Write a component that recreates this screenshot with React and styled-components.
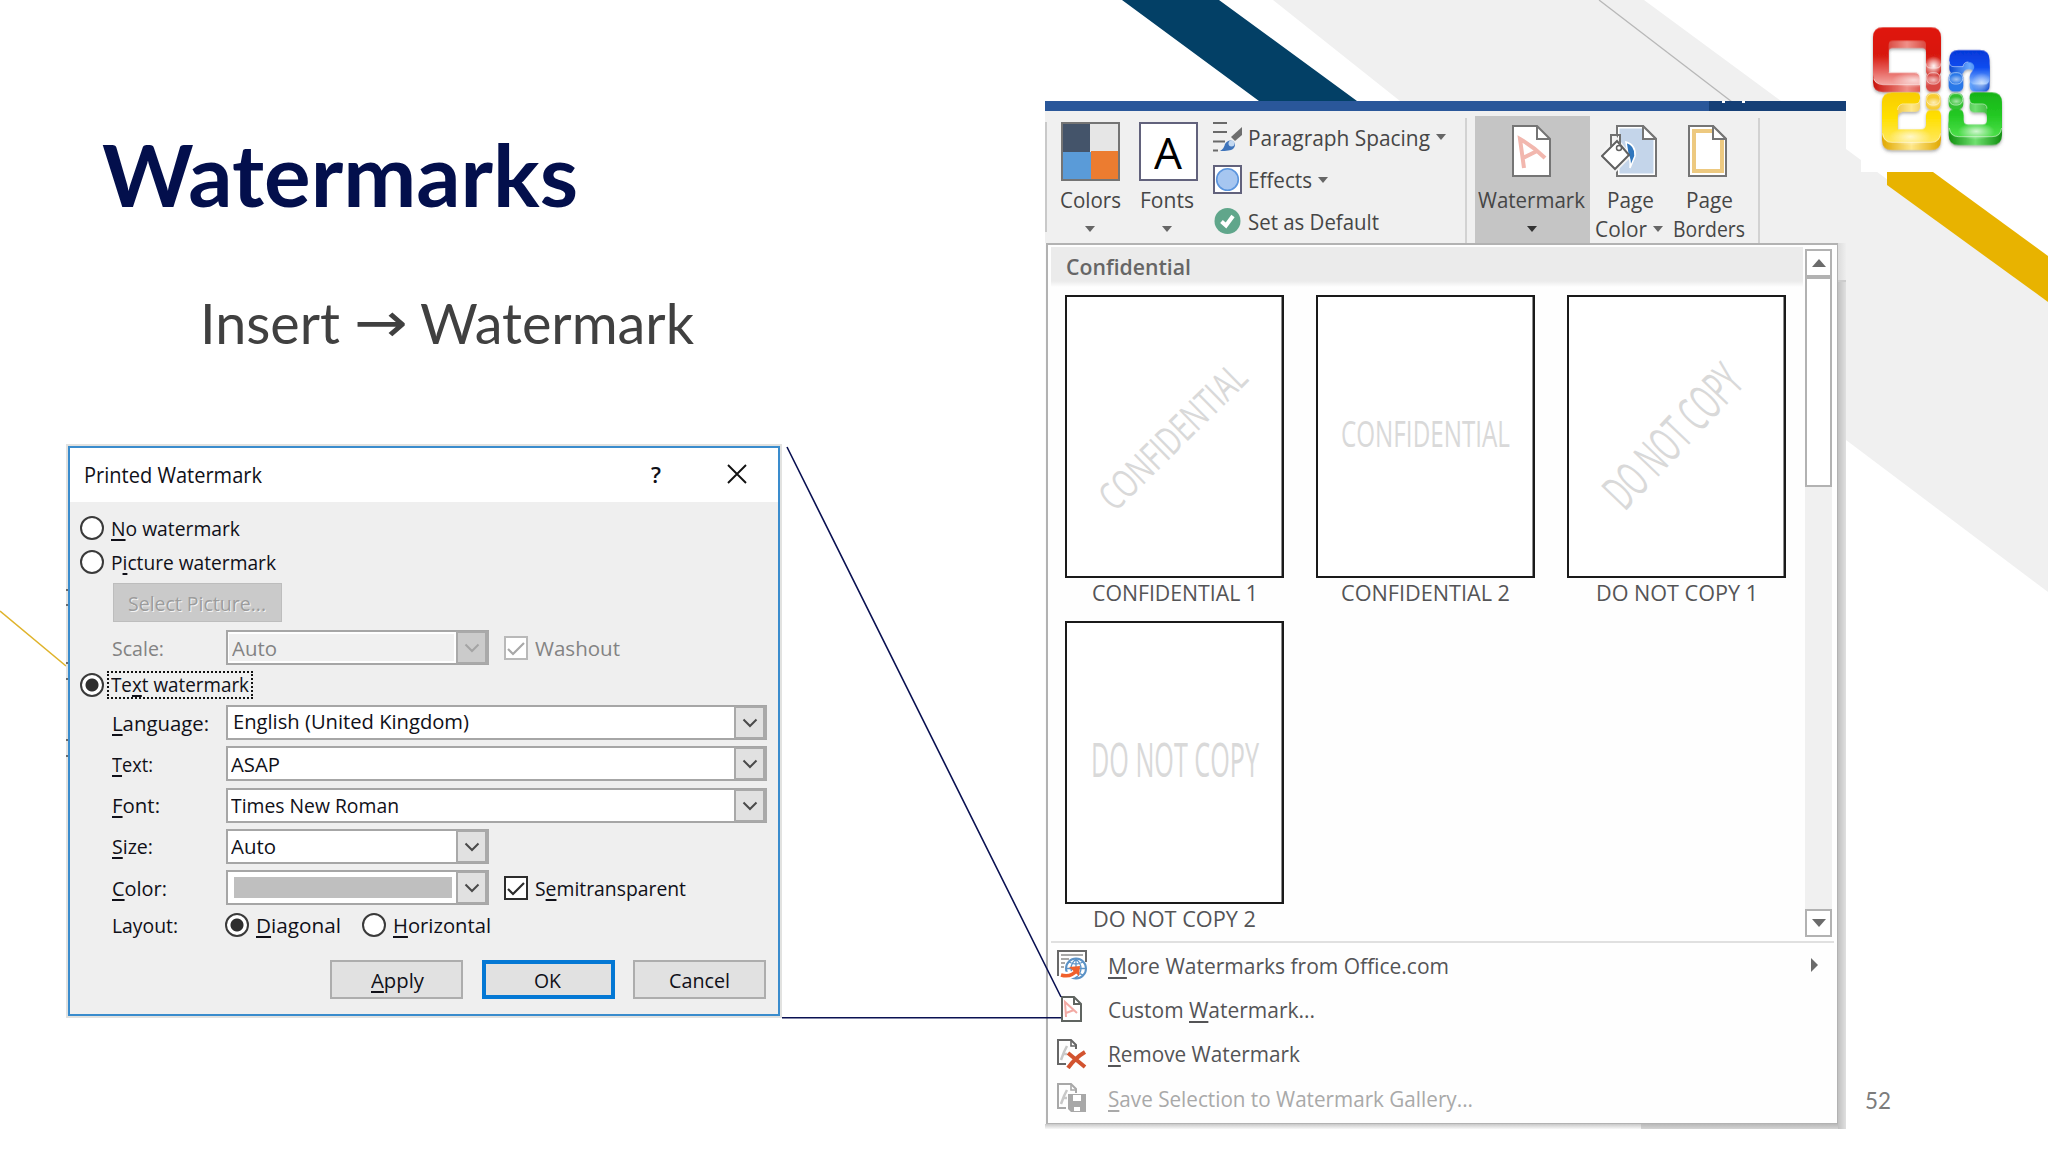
import React, { useLayoutEffect, useRef, useState } from "react";
import styled, { createGlobalStyle, css } from "styled-components";

const ui = '"Open Sans", "Noto Sans", sans-serif';
const slideFont = 'Lato, "Noto Sans", sans-serif';

const GlobalStyle = createGlobalStyle`
  body { margin: 0; background: #fff; overflow: hidden; }
  * { box-sizing: border-box; }
  svg { display: block; flex: none; }
`;

/* ---------- text that fills a given width ---------- */

const FitBox = styled.span`
  display: inline-block;
  flex: none;
  width: ${(p) => p.$w}px;
  white-space: pre;
`;
const FitText = styled.span`
  display: inline-block;
  transform-origin: 0 50%;
  u { text-decoration-thickness: 2px; text-underline-offset: 3px; text-decoration-skip-ink: none; }
`;

function Fit({ w, children }) {
  const ref = useRef(null);
  const [scale, setScale] = useState(1);
  useLayoutEffect(() => {
    if (ref.current.offsetWidth) {
      const style = getComputedStyle(ref.current);
      setScale(w / parseFloat(style.width));
    }
  }, [w, children]);
  return (
    <FitBox $w={w}>
      <FitText ref={ref} style={{ transform: `scaleX(${scale})` }}>{children}</FitText>
    </FitBox>
  );
}

/* ---------- slide ---------- */

const Slide = styled.main`
  position: relative;
  width: 2048px;
  height: 1152px;
  overflow: hidden;
  background: #fff;
  display: grid;
  grid-template-columns: 1045px 801px 1fr;
`;
const Backdrop = styled.svg`
  position: absolute;
  inset: 0;
`;
const Overlay = styled(Backdrop)`
  pointer-events: none;
  z-index: 3;
`;
const LeftColumn = styled.section`
  position: relative;
  padding-left: 68px;
`;
const Title = styled.h1`
  margin: 122px 0 0 34px;
  font: 700 87px/104px ${slideFont};
  color: #030f4c;
`;
const Lead = styled.p`
  margin: 59px 0 0 132px;
  display: flex;
  align-items: center;
  font: 400 56px/76px ${slideFont};
  color: #404040;
`;
const Gap = styled.span`
  width: ${(p) => p.$w}px;
  flex: none;
`;
const Arrow = styled.span`
  display: inline-flex;
  font-family: "DejaVu Sans", sans-serif;
`;

/* ---------- dialog ---------- */

const Dialog = styled.div`
  margin-top: 85px;
  width: 712px;
  height: 570px;
  border: 2px solid #3a8ccd;
  background: #efefef;
  box-shadow: 0 0 0 2px #e2e2e0;
  font: 400 19.5px/28px ${ui};
  color: #101018;
`;
const DialogBar = styled.div`
  height: 54px;
  background: #fff;
  display: flex;
  align-items: center;
  padding: 0 0 2px 14px;
  font-size: 22px;
`;
const Help = styled.span`
  margin-left: 389px;
  margin-right: 66px;
  font-weight: 600;
`;
const DialogBody = styled.div`
  padding: 9px 0 0 10px;
  ${FitBox} { padding-top: 2px; margin-left: -1px; }
`;
const OptionRow = styled.div`
  display: flex;
  align-items: center;
  height: ${(p) => p.$h || 34}px;
  margin-top: ${(p) => p.$mt || 0}px;
  gap: 8px;
`;
const Radio = styled.span`
  width: 24px;
  height: 24px;
  border: 2px solid #3a3a3a;
  border-radius: 50%;
  flex: none;
  background: ${(p) => (p.$on ? "radial-gradient(circle, #2e2e2e 0 6px, #fff 7px)" : "#fff")};
`;
const Focus = styled.span`
  display: flex;
  align-items: center;
  height: 28px;
  margin-left: -5px;
  padding: 0 2px 2px 3px;
  border: 2px dotted #111;
`;
const Fields = styled.div`
  padding-left: 33px;
  margin-top: ${(p) => p.$mt}px;
  display: flex;
  flex-direction: column;
  gap: 6.25px;
`;
const Field = styled.div`
  display: flex;
  align-items: center;
  height: 35px;
  color: ${(p) => (p.$off ? "#838383" : "inherit")};
`;
const Caption = styled.span`
  width: 113px;
  display: flex;
  flex: none;
`;
const Combo = styled.span`
  display: flex;
  width: ${(p) => p.$w}px;
  height: 35px;
  border: 2px solid #a6a6a6;
  border-right-width: 0;
  background: #fff;
  flex: none;
`;
const ComboValue = styled.span`
  flex: 1;
  display: flex;
  align-items: center;
  padding-left: ${(p) => (p.$wide ? 6 : 4)}px;
  padding-bottom: ${(p) => (p.$wide ? 3 : 0)}px;
  margin: ${(p) => (p.$off ? "2px 2px 2px 1px" : "0")};
  background: ${(p) => (p.$off ? "#f0f0f0" : "#fff")};
`;
const ComboArrow = styled.span`
  width: 33px;
  margin: -1px 0;
  border: 2px solid #a9a9a9;
  border-right-width: 4px;
  display: grid;
  place-items: center;
  padding-top: 1px;
  background: ${(p) => (p.$off ? "#cbcbcb" : "#e1e1e1")};
`;
const Swatch = styled.span`
  width: 218px;
  height: 21px;
  background: #bfbfbf;
  margin-left: 2px;
`;
const Check = styled.span`
  width: 24px;
  height: 24px;
  margin: 0 8px 0 15px;
  border: 2px solid ${(p) => (p.$off ? "#b9b9b9" : "#2c2c2c")};
  background: #fff;
  flex: none;
`;
const Push = styled.button`
  width: ${(p) => p.$w || 133}px;
  height: 39px;
  padding: 0;
  display: grid;
  place-items: center;
  font: inherit;
  color: inherit;
  background: #e1e1e1;
  border: 2px solid #adadad;
  ${(p) => p.$primary && css`border: 4px solid #0478d4;`}
  ${(p) => p.$off && css`
    margin: 4px 0 0 33px;
    background: #cacaca;
    border: 1px solid #bdbdbd;
    color: #9c9c9c;
    text-shadow: 1px 1px 0 #f4f4f4;
  `}
`;
const Actions = styled.div`
  display: flex;
  gap: 18.5px;
  margin: 16px 0 0 250px;
`;

/* ---------- Word window ---------- */

const Word = styled.section`
  position: relative;
  margin-top: 101px;
  height: 1028px;
  width: 801px;
  background: #f0f0f0;
  font: 400 22px/29px ${ui};
  color: #464646;
`;
const TitleStrip = styled.div`
  height: 10px;
  background: linear-gradient(90deg, #2a579a 664px, #153f76 664px);
`;
const Ribbon = styled.div`
  height: 132px;
  display: flex;
  padding-left: 7px;
  background: linear-gradient(#c9c9c9, #c9c9c9) 0 11px / 2px 110px no-repeat;
`;
const BigButton = styled.div`
  width: ${(p) => p.$w}px;
  height: 127px;
  margin-top: 5px;
  ${(p) => p.$active && css`background: #c5c5c5;`}
  display: flex;
  flex-direction: column;
  align-items: center;
`;
const IconSlot = styled.div`
  height: 69px;
  padding-top: ${(p) => p.$pt}px;
  padding-right: ${(p) => p.$pr || 0}px;
  padding-left: ${(p) => p.$pl || 0}px;
`;
const Line = styled.div`
  display: flex;
  align-items: center;
  height: 29px;
  gap: 6px;
  padding-right: ${(p) => p.$pr || 0}px;
`;
const SmallButtons = styled.div`
  width: 253px;
  padding: 5px 0 0 7px;
`;
const SmallButton = styled.div`
  display: flex;
  align-items: center;
  gap: 6px;
  height: 42.4px;
`;
const Rule = styled.span`
  width: 2px;
  height: 125px;
  margin: 7px ${(p) => p.$mr}px 0 ${(p) => p.$ml || 0}px;
  background: #d2d2d2;
`;
const FontTile = styled.span`
  display: grid;
  place-items: center;
  width: 59px;
  height: 59px;
  border: 2px solid #62627c;
  background: #fff;
  color: #000;
  font: 400 44px/52px ${ui};
`;
const ColorTile = styled.span`
  display: block;
  width: 59px;
  height: 59px;
  border: 2px solid #747474;
  background: conic-gradient(#e6e6e6 25%, #ec7c30 0 50%, #5a9bd8 0 75%, #44546a 0);
`;
const Below = styled.div`
  height: 886px;
  padding-left: 1px;
  background:
    linear-gradient(#ccc, #ccc) 100% 37px / 8px 2px no-repeat,
    linear-gradient(90deg, #c0c0c0, #e0e0e0 8px) 100% 100% / 8px 847px no-repeat,
    linear-gradient(#b8b8b8, #d4d4d4) 596px 100% / 205px 5px no-repeat,
    linear-gradient(#c8c8c8, #f8f8f8) 0 100% / 596px 5px no-repeat,
    linear-gradient(90deg, #dcdcdc, #eeeeee) 100% 0 / 8px 39px no-repeat,
    #fbfbfb;
`;
const Menu = styled.div`
  width: 792px;
  height: 881px;
  background: #fefefe;
  border: solid #b2b2b2;
  border-width: 2px 1px 1px 2px;
  color: #545456;
`;
const Gallery = styled.div`
  display: flex;
  height: 698px;
  margin: 0 3px 0 3px;
  padding-top: 2px;
  border-bottom: 2px solid #e0e0e0;
`;
const GalleryMain = styled.div`
  width: 752px;
`;
const GalleryHead = styled.div`
  height: 40px;
  padding: 5px 0 0 15px;
  background: linear-gradient(#ebebeb 34px, #fefefe);
  font-weight: 600;
  color: #666;
`;
const Thumbs = styled.div`
  display: grid;
  grid-template-columns: repeat(3, 219px);
  grid-auto-rows: 326px;
  column-gap: 32px;
  padding: 8px 0 0 14px;
`;
const Thumb = styled.div`
  display: flex;
  flex-direction: column;
  align-items: center;
`;
const Page = styled.div`
  width: 219px;
  height: 283px;
  border: 2px solid #1a1a1a;
  box-shadow: inset -1px 0 0 #8d8d8d;
  display: grid;
  place-items: center;
  background: #fff;
`;
const Mark = styled.span`
  font: 400 ${(p) => p.$size}px/1 ${ui};
  color: #d9d9d9;
  transform: translate(${(p) => p.$dx}px, ${(p) => p.$dy}px) rotate(${(p) => p.$turn}deg);
`;
const Scroll = styled.div`
  width: 27px;
  margin: 2px 0 4px 2px;
  background: #f0f0f0;
  display: flex;
  flex-direction: column;
`;
const ScrollButton = styled.div`
  height: 28px;
  border: 2px solid #b2b2b2;
  background: #fff;
  display: grid;
  place-items: center;
`;
const ScrollThumb = styled.div`
  height: 210px;
  margin-bottom: auto;
  border: 2px solid #b2b2b2;
  background: #fff;
`;
const MenuItem = styled.div`
  display: flex;
  align-items: center;
  height: 44.4px;
  padding-left: 9px;
  color: ${(p) => (p.$off ? "#a9a9a9" : "inherit")};
`;
const MenuIcon = styled.span`
  width: 51px;
  height: 30px;
  flex: none;
`;
const Submenu = styled.span`
  margin: 0 19px 0 auto;
`;

const RightColumn = styled.aside`
  position: relative;
  padding: 20px 0 0 20.7px;
`;
const PageNumber = styled.div`
  margin: 927px 0 0 -1.5px;
  font: 400 23.5px/32px ${slideFont};
  color: #7c7c7c;
`;

/* ---------- drawings ---------- */

const Down = ({ c = "#666" }) => (
  <svg width="10" height="6" viewBox="0 0 10 6"><path d="M0 0h10L5 6z" fill={c} /></svg>
);
const Chevron = ({ c = "#444" }) => (
  <svg width="16" height="10" viewBox="0 0 16 10"><path d="M1.5 1.5 8 8l6.500-6.500" fill="none" stroke={c} strokeWidth="2" /></svg>
);
const Tick = ({ c = "#2c2c2c" }) => (
  <svg width="20" height="20" viewBox="0 0 20 20"><path d="M2 11l5 5L18 5" fill="none" stroke={c} strokeWidth="2.2" /></svg>
);

const LogoDefs = () => (
  <defs>
    {[
      ["lr", "#e01408", "#d81a12", "#f4a8a4"],
      ["lb", "#0638d8", "#0a4cf0", "#8fc0ff"],
      ["ly", "#f8cc00", "#ffe000", "#ffe860"],
      ["lg", "#18b418", "#22c822", "#4ee04a"],
    ].map(([id, a, b, c]) => (
      <linearGradient key={id} id={id} x1="0" y1="0" x2="0" y2="1">
        <stop offset="0" stopColor={a} /><stop offset=".5" stopColor={b} /><stop offset="1" stopColor={c} />
      </linearGradient>
    ))}
    {[
      ["er", "#c8120a", "#f09088"], ["eb", "#0848d0", "#68a8ff"],
      ["ey", "#e0a800", "#ffe88a"], ["eg", "#10900f", "#70e070"],
    ].map(([id, a, b]) => (
      <linearGradient key={id} id={id}>
        <stop offset="0" stopColor={a} /><stop offset=".5" stopColor={b} /><stop offset="1" stopColor={a} />
      </linearGradient>
    ))}
    <radialGradient id="glow"><stop offset="0" stopColor="#fff" stopOpacity=".95" /><stop offset="1" stopColor="#fff" stopOpacity="0" /></radialGradient>
    <filter id="soft" x="-20%" y="-20%" width="140%" height="150%"><feDropShadow dx="0" dy="5" stdDeviation="5" floodColor="#555" floodOpacity=".5" /></filter>
  </defs>
);

const RED = "M308 82H452Q482 82 482 112V190Q482 204 468 204H451Q437 204 437 190V134Q437 122 425 122H337Q325 122 325 134V218H402Q419 218 419 235V254H308Q278 254 278 224V112Q278 82 308 82Z";
const BLUE = "M535 150H598Q628 150 628 180V236Q628 254 610 254H586Q568 254 568 236V230Q568 220 576 214Q584 206 582 198Q578 186 564 186Q550 188 548 200H521Q507 200 507 184V178Q507 150 535 150Z";
const YELLOW = "M335 277H404Q419 277 419 290V298Q419 312 404 312H366Q352 316 352 330V388H422Q437 388 437 372V348Q437 330 452 330H468Q482 330 482 346V396Q482 427 452 427H335Q305 427 305 396V307Q305 277 335 277Z";
const GREEN = "M582 277H635Q665 277 665 307V380Q665 410 635 410H535Q505 410 505 380V346Q505 328 520 328H535Q550 328 550 346V360Q550 374 564 374H606Q620 374 620 360V326Q620 312 606 312H582Q568 312 568 298V290Q568 277 582 277Z";

const Logo = () => (
  <svg width="143.300" height="136.700" viewBox="260 60 430 410">
    <LogoDefs />
    <g filter="url(#soft)">
      <path d={RED} fill="url(#er)" transform="translate(0 22)" />
      <path d={BLUE} fill="url(#eb)" transform="translate(0 21)" />
      <path d={YELLOW} fill="url(#ey)" transform="translate(0 23)" />
      <path d={GREEN} fill="url(#eg)" transform="translate(0 25)" />
      <path d={RED} fill="url(#lr)" />
      <path d={BLUE} fill="url(#lb)" />
      <path d={YELLOW} fill="url(#ly)" />
      <path d={GREEN} fill="url(#lg)" />
      <rect x="437" y="216" width="44" height="59" rx="17" fill="#d84a44" />
      <rect x="505" y="216" width="44" height="59" rx="17" fill="#2a78e8" />
      <rect x="437" y="279" width="44" height="50" rx="17" fill="#f8cc30" />
      <rect x="505" y="279" width="44" height="50" rx="17" fill="#30c030" />
    </g>
    <g fill="none" stroke="#fff" strokeOpacity=".5" strokeWidth="3">
      <rect x="439" y="218" width="40" height="34" rx="16" />
      <rect x="507" y="218" width="40" height="34" rx="16" />
      <rect x="439" y="281" width="40" height="34" rx="16" />
      <rect x="507" y="281" width="40" height="34" rx="16" />
      <path d="M325 218H402Q419 218 419 235V254H308Q286 252 280 236" />
      <path d="M419 298Q419 312 404 312H366Q352 316 352 330M568 298Q568 312 582 312H606Q620 312 620 326" />
      <path d="M437 190Q437 204 451 204H468Q482 204 482 190M507 184Q507 200 521 200H548Q550 186 564 186" />
      <path d="M307 400Q311 427 335 427H452Q478 427 481 400M507 384Q511 410 535 410H635Q661 410 664 384" />
    </g>
    <ellipse cx="460" cy="198" rx="28" ry="30" fill="url(#glow)" />
    <ellipse cx="400" cy="240" rx="66" ry="24" fill="url(#glow)" opacity=".7" />
    <ellipse cx="460" cy="240" rx="24" ry="16" fill="url(#glow)" opacity=".7" />
    <ellipse cx="528" cy="238" rx="24" ry="14" fill="url(#glow)" opacity=".6" />
    <ellipse cx="604" cy="248" rx="30" ry="30" fill="url(#glow)" opacity=".6" />
    <ellipse cx="460" cy="308" rx="24" ry="16" fill="url(#glow)" opacity=".7" />
    <ellipse cx="528" cy="304" rx="24" ry="14" fill="url(#glow)" opacity=".6" />
    <ellipse cx="390" cy="410" rx="64" ry="28" fill="url(#glow)" opacity=".75" />
    <ellipse cx="588" cy="394" rx="56" ry="26" fill="url(#glow)" opacity=".8" />
  </svg>
);

const ParagraphIcon = () => (
  <svg width="29" height="30" viewBox="0 0 29 30">
    <path d="M0 1h14M0 10h14M0 19.500h12M0 28.500h5" stroke="#6a6a6a" strokeWidth="2" />
    <path d="M29 5v8l-7 6-4-4z" fill="#6e6e6e" />
    <path d="M7 29q4-2 5-7 3-5 8-3 4 4 0 8-3 2-13 2z" fill="#3f74ba" />
    <circle cx="18.500" cy="21.500" r="3" fill="#c3d8f0" />
  </svg>
);
const EffectsIcon = () => (
  <svg width="29" height="29" viewBox="0 0 29 29">
    <rect x="1" y="1" width="27" height="27" fill="#fff" stroke="#62627c" strokeWidth="2" />
    <circle cx="14.500" cy="14.500" r="10.800" fill="#a6c6f0" stroke="#5b95dd" strokeWidth="1.600" />
  </svg>
);
const DefaultIcon = () => (
  <svg width="29" height="28" viewBox="0 0 29 28">
    <circle cx="14.500" cy="13" r="13" fill="#60a68b" />
    <path d="M8.500 13.500l4.500 4L20 8" fill="none" stroke="#fff" strokeWidth="4" />
  </svg>
);
const WatermarkIcon = () => (
  <svg width="39" height="52" viewBox="0 0 39 52">
    <path d="M1 1h24l13 13v37H1z" fill="#fff" stroke="#757575" strokeWidth="2" />
    <path d="M25 1v13h13" fill="none" stroke="#757575" strokeWidth="2" />
    <path d="M12 43L8 14q14 8 25 19M11 33l14-7" fill="none" stroke="#f2b7ae" strokeWidth="4" />
  </svg>
);
const PageColorIcon = () => (
  <svg width="56" height="52" viewBox="0 0 56 52">
    <path d="M16 1h26l13 13v37H16z" fill="#fff" stroke="#757575" strokeWidth="2" />
    <path d="M18.500 3.500H42V14h10.500v34.500h-34z" fill="#c4d5ea" />
    <path d="M42 1v13h13z" fill="#fff" stroke="#757575" strokeWidth="2" />
    <path d="M13 8L-1 31l15 17 17-17z" fill="#f3f3f3" />
    <path d="M25 17q10 3 9 14l-5 12q1-8-2-13z" fill="#2f76bd" stroke="#fff" strokeWidth="1.500" />
    <path d="M1 31L16 16l12 14-14 14z" fill="#fff" stroke="#606060" strokeWidth="2" />
    <path d="M10 21V10h9v14" fill="none" stroke="#707070" strokeWidth="2" />
    <circle cx="18" cy="23" r="2.500" fill="#fff" stroke="#606060" strokeWidth="1.500" />
  </svg>
);
const PageBordersIcon = () => (
  <svg width="39" height="52" viewBox="0 0 39 52">
    <path d="M1 1h24l13 13v37H1z" fill="#fff" stroke="#757575" strokeWidth="2" />
    <path d="M25 6H6v40h28V15" fill="none" stroke="#edc980" strokeWidth="4" />
    <path d="M25 1v13h13z" fill="#fff" stroke="#757575" strokeWidth="2" />
  </svg>
);
const OnlineIcon = () => (
  <svg width="30" height="30" viewBox="0 0 30 30">
    <path d="M1 26V1h28v11" fill="none" stroke="#686868" strokeWidth="2" />
    <path d="M4 5h22M4 9h8M4 13h4M4 17h3" stroke="#a8a8a8" strokeWidth="2" />
    <circle cx="19" cy="18.500" r="10" fill="#fff" stroke="#5b92c6" strokeWidth="2" />
    <path d="M19 8.500v20M9 18.500h20M12 12q7 4 14 0M12 25q7-4 14 0M19 9q-10 9 0 19M19 9q10 9 0 19" fill="none" stroke="#5b92c6" strokeWidth="1.300" />
    <path d="M4 24q10 4 16-3" fill="none" stroke="#fff" strokeWidth="7" />
    <path d="M4 25q10 3 16-5" fill="none" stroke="#f0602c" strokeWidth="3.500" />
    <path d="M12 17l11-1-1 10z" fill="#f0602c" />
  </svg>
);
const CustomIcon = () => (
  <svg width="30" height="30" viewBox="0 0 30 30">
    <path d="M5 2h12l7 7v17H5z" fill="#fff" stroke="#5f6460" strokeWidth="2" />
    <path d="M17 2v7h7" fill="none" stroke="#5f6460" strokeWidth="2" />
    <path d="M9 22L8 7l12 11M9 18l8-3" fill="none" stroke="#f3aaa4" strokeWidth="2" />
  </svg>
);
const HalfPage = ({ c }) => (
  <>
    <path d="M9 25H1V1h13l5 5v4" fill="none" stroke={c} strokeWidth="2" />
    <path d="M14 1v6h6" fill="none" stroke={c} strokeWidth="1.600" />
    <path d="M4 21l3-8 3-6M7 15h3" fill="none" stroke="#c8c8c8" strokeWidth="2.500" />
  </>
);
const RemoveIcon = () => (
  <svg width="30" height="30" viewBox="0 0 30 30">
    <HalfPage c="#666" />
    <path d="M11 14l17 14M28 13Q18 19 11 29" fill="none" stroke="#d2532f" strokeWidth="4" />
  </svg>
);
const SaveIcon = () => (
  <svg width="30" height="30" viewBox="0 0 30 30">
    <HalfPage c="#a8a8a8" />
    <path d="M11 11h18v18H14l-3-3z" fill="#a8a8a8" />
    <path d="M16 12h8v6h-8zM17 24h6v4h-6z" fill="#fff" />
  </svg>
);

/* ---------- parts ---------- */

const Select = ({ w = 541, textWidth, off, wide, swatch, children }) => (
  <Combo $w={w}>
    <ComboValue $off={off} $wide={wide}>
      {swatch ? <Swatch /> : <Fit w={textWidth}>{children}</Fit>}
    </ComboValue>
    <ComboArrow $off={off}><Chevron c={off ? "#a4a4a4" : "#4a4a4a"} /></ComboArrow>
  </Combo>
);

const PrintedWatermark = () => (
  <Dialog>
    <DialogBar>
      <Fit w={178}>Printed Watermark</Fit>
      <Help>?</Help>
      <svg width="20" height="20" viewBox="0 0 20 20"><path d="M1 1l18 18M19 1L1 19" stroke="#111" strokeWidth="1.900" /></svg>
    </DialogBar>
    <DialogBody>
      <OptionRow><Radio /><Fit w={129}><u>N</u>o watermark</Fit></OptionRow>
      <OptionRow><Radio /><Fit w={165}>P<u>i</u>cture watermark</Fit></OptionRow>
      <Push $w={169} $off><Fit w={138}>Select Picture...</Fit></Push>
      <Fields $mt={8}>
        <Field $off>
          <Caption><Fit w={52}>Scale:</Fit></Caption>
          <Select w={263} textWidth={45} off>Auto</Select>
          <Check $off><Tick c="#a8a8a8" /></Check>
          <Fit w={85}>Washout</Fit>
        </Field>
      </Fields>
      <OptionRow $h={28} $mt={6}><Radio $on /><Focus><Fit w={138}>Te<u>x</u>t watermark</Fit></Focus></OptionRow>
      <Fields $mt={6}>
        <Field><Caption><Fit w={97}><u>L</u>anguage:</Fit></Caption><Select textWidth={236} wide>English (United Kingdom)</Select></Field>
        <Field><Caption><Fit w={41}><u>T</u>ext:</Fit></Caption><Select textWidth={49}>ASAP</Select></Field>
        <Field><Caption><Fit w={48}><u>F</u>ont:</Fit></Caption><Select textWidth={168}>Times New Roman</Select></Field>
        <Field><Caption><Fit w={41}><u>S</u>ize:</Fit></Caption><Select w={263} textWidth={45}>Auto</Select></Field>
        <Field>
          <Caption><Fit w={55}><u>C</u>olor:</Fit></Caption>
          <Select w={263} swatch />
          <Check><Tick /></Check>
          <Fit w={151}>S<u>e</u>mitransparent</Fit>
        </Field>
      </Fields>
      <OptionRow $h={39}>
        <Gap $w={25} />
        <Fit w={66}>Layout:</Fit><Gap $w={31} />
        <Radio $on /><Fit w={85}><u>D</u>iagonal</Fit><Gap $w={5} />
        <Radio /><Fit w={98}><u>H</u>orizontal</Fit>
      </OptionRow>
      <Actions>
        <Push><Fit w={53}><u>A</u>pply</Fit></Push>
        <Push $primary><Fit w={27}>OK</Fit></Push>
        <Push><Fit w={61}>Cancel</Fit></Push>
      </Actions>
    </DialogBody>
  </Dialog>
);

const WordRibbon = () => (
  <Ribbon>
    <BigButton $w={77}><IconSlot $pt={6}><ColorTile /></IconSlot><Line><Fit w={61}>Colors</Fit></Line><Line $pr={2}><Down /></Line></BigButton>
    <BigButton $w={77}><IconSlot $pt={6} $pl={1}><FontTile><Fit w={28}>A</Fit></FontTile></IconSlot><Line $pr={1}><Fit w={54}>Fonts</Fit></Line><Line $pr={2}><Down /></Line></BigButton>
    <SmallButtons>
      <SmallButton><ParagraphIcon /><Fit w={182}>Paragraph Spacing</Fit><Down /></SmallButton>
      <SmallButton><EffectsIcon /><Fit w={64}>Effects</Fit><Down /></SmallButton>
      <SmallButton><DefaultIcon /><Fit w={131}>Set as Default</Fit></SmallButton>
    </SmallButtons>
    <Gap $w={6} />
    <Rule $mr={8} />
    <BigButton $w={115} $active><IconSlot $pt={9} $pr={3}><WatermarkIcon /></IconSlot><Line $pr={2}><Fit w={107}>Watermark</Fit></Line><Line $pr={1}><Down c="#333" /></Line></BigButton>
    <BigButton $w={80}><IconSlot $pt={9} $pr={2}><PageColorIcon /></IconSlot><Line><Fit w={47}>Page</Fit></Line><Line $pr={2}><Fit w={52}>Color</Fit><Down /></Line></BigButton>
    <BigButton $w={79}><IconSlot $pt={9} $pr={4}><PageBordersIcon /></IconSlot><Line $pr={1}><Fit w={47}>Page</Fit></Line><Line $pr={2}><Fit w={72}>Borders</Fit></Line></BigButton>
    <Rule $ml={9} $mr={0} />
  </Ribbon>
);

const marks = [
  { text: "CONFIDENTIAL", name: "CONFIDENTIAL 1", nameWidth: 166, size: 39, width: 189, turn: -44.5, dx: -3, dy: -1 },
  { text: "CONFIDENTIAL", name: "CONFIDENTIAL 2", nameWidth: 169, size: 36, width: 169, turn: 0, dx: 0, dy: -3 },
  { text: "DO NOT COPY", name: "DO NOT COPY 1", nameWidth: 162, size: 49, width: 176, turn: -46.5, dx: -5, dy: -1 },
  { text: "DO NOT COPY", name: "DO NOT COPY 2", nameWidth: 163, size: 48, width: 168, turn: 0, dx: 0, dy: -4 },
];

const WatermarkMenu = () => (
  <Menu>
    <Gallery>
      <GalleryMain>
        <GalleryHead><Fit w={125}>Confidential</Fit></GalleryHead>
        <Thumbs>
          {marks.map((m) => (
            <Thumb key={m.name}>
              <Page><Mark $size={m.size} $turn={m.turn} $dx={m.dx} $dy={m.dy}><Fit w={m.width}>{m.text}</Fit></Mark></Page>
              <Fit w={m.nameWidth}>{m.name}</Fit>
            </Thumb>
          ))}
        </Thumbs>
      </GalleryMain>
      <Scroll>
        <ScrollButton><svg width="14" height="8" viewBox="0 0 14 8"><path d="M7 0l7 8H0z" fill="#6b6b6b" /></svg></ScrollButton>
        <ScrollThumb />
        <ScrollButton><svg width="14" height="8" viewBox="0 0 14 8"><path d="M7 8l7-8H0z" fill="#6b6b6b" /></svg></ScrollButton>
      </Scroll>
    </Gallery>
    <MenuItem>
      <MenuIcon><OnlineIcon /></MenuIcon><Fit w={341}><u>M</u>ore Watermarks from Office.com</Fit>
      <Submenu><svg width="7" height="14" viewBox="0 0 7 14"><path d="M0 0l7 7-7 7z" fill="#6b6b6b" /></svg></Submenu>
    </MenuItem>
    <MenuItem><MenuIcon><CustomIcon /></MenuIcon><Fit w={207}>Custom <u>W</u>atermark...</Fit></MenuItem>
    <MenuItem><MenuIcon><RemoveIcon /></MenuIcon><Fit w={192}><u>R</u>emove Watermark</Fit></MenuItem>
    <MenuItem $off><MenuIcon><SaveIcon /></MenuIcon><Fit w={365}><u>S</u>ave Selection to Watermark Gallery...</Fit></MenuItem>
  </Menu>
);

export default function App() {
  return (
    <>
      <GlobalStyle />
      <Slide>
        <Backdrop width="2048" height="1152" viewBox="0 0 2048 1152">
          <path d="M1273 0H1644L1888 180L2048 302V592L1846 440L1400 101Z" fill="#f0f0f0" />
          <path d="M1122 0H1219L1357 101L1400 140H1300L1259 101Z" fill="#034066" />
          <path d="M1599 0L1736 105" stroke="#b8b8b8" strokeWidth="1.300" />
          <path d="M1861 0H2048V172H1861Z" fill="#fff" />
          <path d="M1887 172H1933L2048 256V302L1887 185Z" fill="#e8b300" />
          <path d="M0 611L66 666" stroke="#dfb32a" strokeWidth="1.600" />
        </Backdrop>
        <LeftColumn>
          <Title><Fit w={476}>Watermarks</Fit></Title>
          <Lead>
            <Fit w={140}>Insert</Fit><Gap $w={14} /><Arrow><Fit w={54}>→</Fit></Arrow><Gap $w={12} /><Fit w={274}>Watermark</Fit>
          </Lead>
          <PrintedWatermark />
        </LeftColumn>
        <Word>
          <TitleStrip />
          <WordRibbon />
          <Below><WatermarkMenu /></Below>
        </Word>
        <RightColumn>
          <Logo />
          <PageNumber><Fit w={26}>52</Fit></PageNumber>
        </RightColumn>
        <Overlay width="2048" height="1152" viewBox="0 0 2048 1152">
          <path d="M787 447L1061 997M782 1017.700H1061" fill="none" stroke="#0a1152" strokeWidth="1.600" />
          <path d="M1722 101h3v2h-3zM1742 101h3v2h-3z" fill="#fff" />
          <path d="M66 590h2M66 605h2M66 663h2M66 679h2M66 740h2M66 756h2" stroke="#444" strokeWidth="1.600" />
        </Overlay>
      </Slide>
    </>
  );
}
